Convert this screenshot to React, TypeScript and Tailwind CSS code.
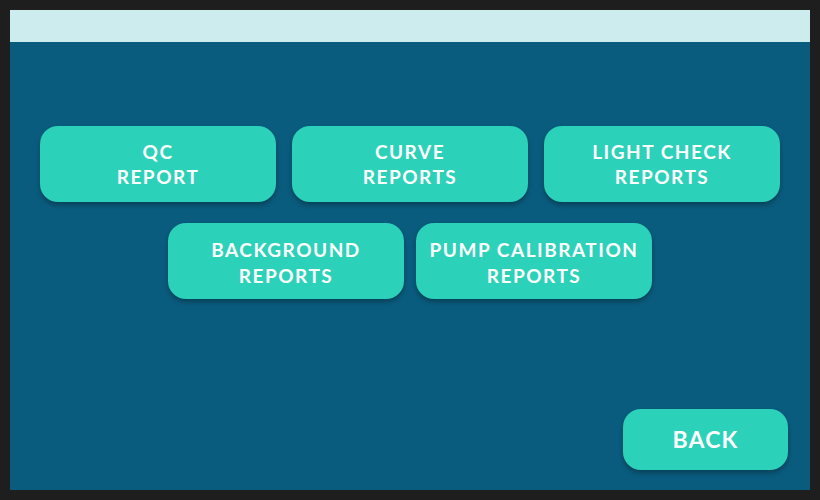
import React from 'react';

const ROW_ONE = [
  ['QC', 'REPORT'],
  ['CURVE', 'REPORTS'],
  ['LIGHT CHECK', 'REPORTS'],
];

const ROW_TWO = [
  ['BACKGROUND', 'REPORTS'],
  ['PUMP CALIBRATION', 'REPORTS'],
];

const ReportButton: React.FC<{ lines: string[]; low?: boolean }> = ({ lines, low }) => (
  <button
    className={`w-[236px] h-[76px] rounded-[18px] bg-[#2bd1b8] text-white text-[19px] font-bold tracking-[0.08em] shadow-[0_3px_5px_rgba(0,0,0,0.3)] flex flex-col items-center justify-center ${low ? 'leading-[26px] pt-[3px]' : 'leading-[25px]'}`}
  >
    {lines.map((l, i) => (
      <span key={i}>{l}</span>
    ))}
  </button>
);

export default function App() {
  return (
    <div className="w-[820px] h-[500px] bg-[#1e1e1e] p-[10px] font-['Lato',sans-serif]">
      <div className="w-full h-full flex flex-col bg-[#0a5c7e]">
        <div className="h-[32px] bg-[#cdeced]" />
        <div className="flex-1 flex flex-col px-[30px] pt-[84px]">
          <div className="flex gap-[16px]">
            {ROW_ONE.map((l, i) => (
              <ReportButton key={i} lines={l} />
            ))}
          </div>
          <div className="flex justify-center gap-[12px] mt-[21px]">
            {ROW_TWO.map((l, i) => (
              <ReportButton key={i} lines={l} low />
            ))}
          </div>
          <div className="flex-1" />
          <div className="flex justify-end pb-[20px] -mr-[8px]">
            <button className="w-[165px] h-[61px] rounded-[18px] bg-[#2bd1b8] text-white text-[23px] font-bold tracking-[0.05em] shadow-[0_3px_5px_rgba(0,0,0,0.3)]">
              BACK
            </button>
          </div>
        </div>
      </div>
    </div>
  );
}
